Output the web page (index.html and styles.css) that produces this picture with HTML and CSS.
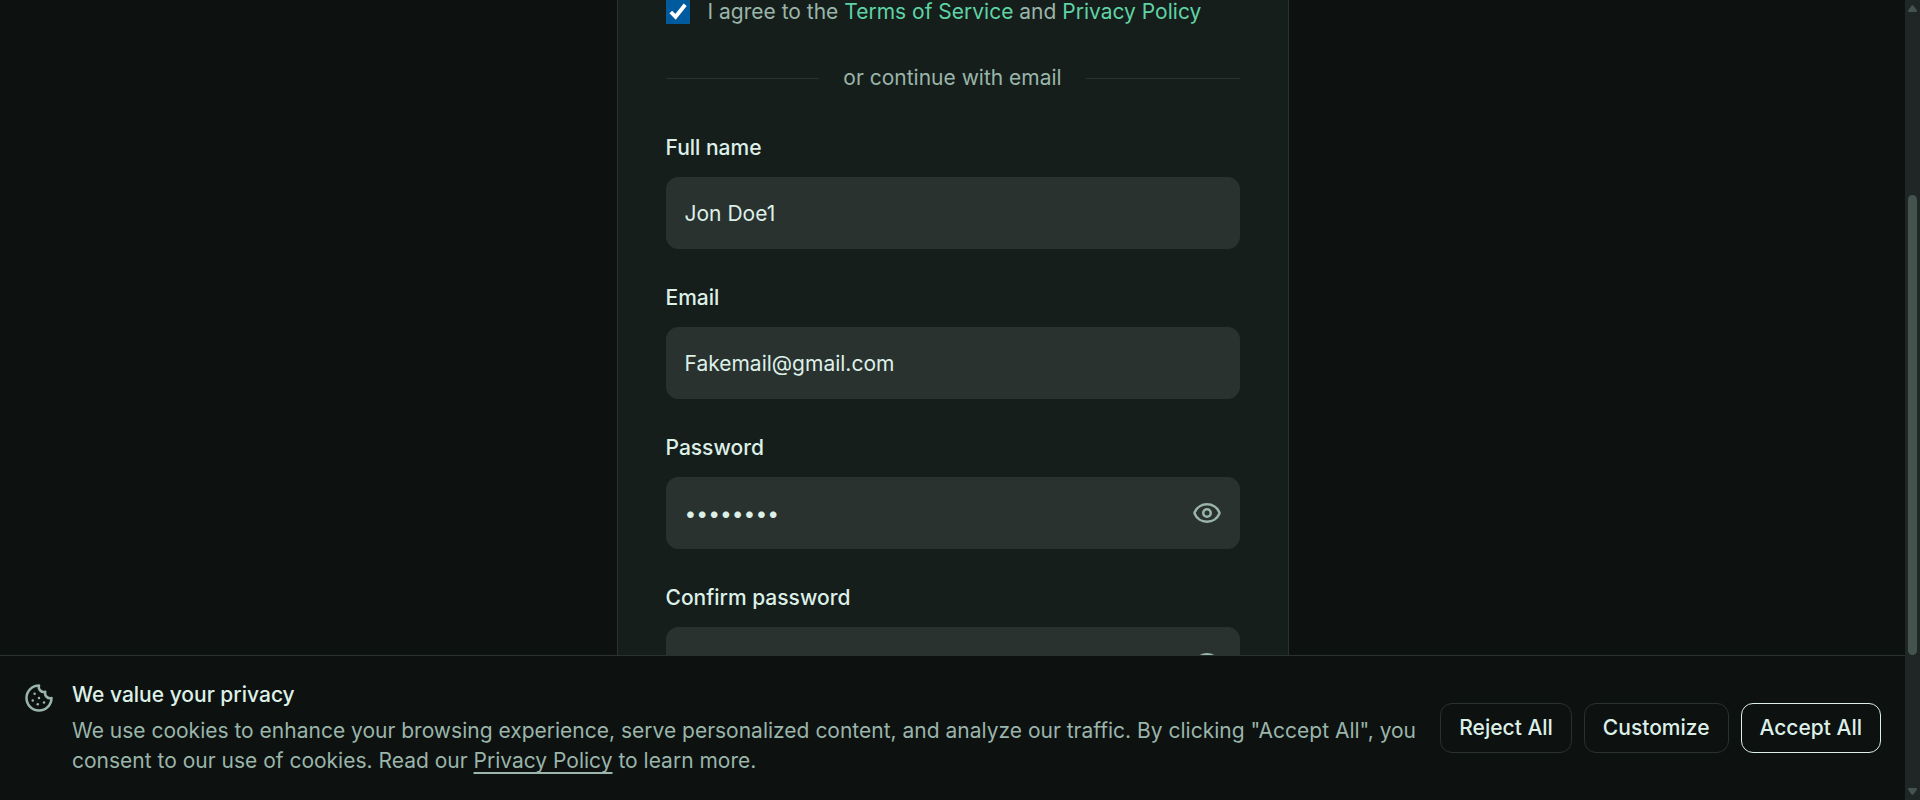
FILE: index.html
```html
<!DOCTYPE html>
<html lang="en">
<head>
<meta charset="utf-8">
<title>Create account</title>
<link rel="stylesheet" href="styles.css">
</head>
<body>
<div class="page">
  <main class="content">
    <form class="card">
      <div class="agree">
        <input class="agree-box" type="checkbox" id="agree" checked>
        <label for="agree">I agree to the <a class="link" href="#terms">Terms of Service</a> and <a class="link" href="#privacy">Privacy Policy</a></label>
      </div>
      <div class="divider">or continue with email</div>
      <div class="fields">
        <div class="field">
          <label class="field-label" for="name">Full name</label>
          <input class="field-input" id="name" type="text" value="Jon Doe1">
        </div>
        <div class="field">
          <label class="field-label" for="email">Email</label>
          <input class="field-input" id="email" type="email" value="Fakemail@gmail.com">
        </div>
        <div class="field">
          <label class="field-label" for="password">Password</label>
          <div class="secret">
            <input class="field-input" id="password" type="password" value="password">
            <button class="reveal" type="button" aria-label="Show password">
              <svg class="icon" viewBox="0 0 24 24"><path d="M2.062 12.348a1 1 0 0 1 0-.696 10.75 10.75 0 0 1 19.876 0 1 1 0 0 1 0 .696 10.75 10.75 0 0 1-19.876 0"/><circle cx="12" cy="12" r="3"/></svg>
            </button>
          </div>
        </div>
        <div class="field">
          <label class="field-label" for="confirm">Confirm password</label>
          <div class="secret">
            <input class="field-input" id="confirm" type="password">
            <button class="reveal" type="button" aria-label="Show confirmed password">
              <svg class="icon" viewBox="0 0 24 24"><path d="M2.062 12.348a1 1 0 0 1 0-.696 10.75 10.75 0 0 1 19.876 0 1 1 0 0 1 0 .696 10.75 10.75 0 0 1-19.876 0"/><circle cx="12" cy="12" r="3"/></svg>
            </button>
          </div>
        </div>
      </div>
    </form>
  </main>
  <section class="banner" aria-labelledby="banner-title">
    <svg class="icon banner-icon" viewBox="0 0 24 24"><path d="M12 2a10 10 0 1 0 10 10 4 4 0 0 1-5-5 4 4 0 0 1-5-5"/><path d="M8.5 8.5v.01"/><path d="M16 15.5v.01"/><path d="M12 12v.01"/><path d="M11 17v.01"/><path d="M7 14v.01"/></svg>
    <div class="banner-text">
      <h2 class="banner-title" id="banner-title">We value your privacy</h2>
      <p class="banner-copy">We use cookies to enhance your browsing experience, serve personalized content, and analyze our traffic. By clicking "Accept All", you consent to our use of cookies. Read our <a class="banner-link" href="#privacy">Privacy Policy</a> to learn more.</p>
    </div>
    <div class="actions">
      <button class="btn" type="button">Reject All</button>
      <button class="btn" type="button">Customize</button>
      <button class="btn btn-primary" type="button">Accept All</button>
    </div>
  </section>
</div>
<div class="scroll" aria-hidden="true">
  <svg class="arrow" viewBox="0 0 9 7"><path d="M4.500 0C5.200 0 9 5 9 6Q9 7 8 7H1Q0 7 0 6C0 5 3.800 0 4.500 0Z"/></svg>
  <div class="track">
    <div class="thumb"></div>
  </div>
  <svg class="arrow" viewBox="0 0 9 7"><path d="M4.500 7C5.200 7 9 2 9 1Q9 0 8 0H1Q0 0 0 1C0 2 3.800 7 4.500 7Z"/></svg>
</div>
</body>
</html>
```
FILE: styles.css
```css
:root {
  --bg: #0d1110;
  --card: #161e1b;
  --field: #29322f;
  --line: #29322f;
  --text: #ddf0e8;
  --muted: #9ab5aa;
  --accent: #5fd3a5;
}

* {
  box-sizing: border-box;
}

body {
  margin: 0;
  height: 100vh;
  display: flex;
  overflow: hidden;
  background: var(--bg);
  color: var(--text);
  font: 400 21px/30px Inter, "Liberation Sans", sans-serif;
}

.page {
  flex: 1;
  min-width: 0;
  display: flex;
  flex-direction: column;
}

.content {
  flex: 1;
  min-height: 0;
  overflow: hidden;
}

.card {
  max-width: 672px;
  margin: 0 auto;
  padding: 0 48px 48px;
  background: var(--card);
  border: solid var(--line);
  border-width: 0 1px;
}

.agree {
  display: flex;
  align-items: center;
  gap: 18px;
  line-height: 24px;
  color: var(--muted);
}

.agree-box {
  width: 24px;
  height: 24px;
  margin: 0;
  accent-color: #005a9e;
}

.link {
  color: var(--accent);
  text-decoration: none;
}

.divider {
  display: flex;
  align-items: center;
  gap: 24px;
  margin: 39px 0 43px;
  color: var(--muted);
}

.divider::before,
.divider::after {
  content: "";
  flex: 1;
  height: 1px;
  background: var(--line);
}

.fields {
  display: flex;
  flex-direction: column;
  gap: 37px;
}

.field {
  display: flex;
  flex-direction: column;
  gap: 17px;
}

.field-label {
  font-weight: 500;
  line-height: 24px;
}

.field-input {
  width: 100%;
  height: 72px;
  padding: 0 18px;
  border: 1px solid var(--field);
  border-radius: 12px;
  outline: none;
  background: var(--field);
  color: var(--text);
  font: inherit;
}

.secret {
  position: relative;
}

.reveal {
  position: absolute;
  inset: 0 18px 0 auto;
  display: flex;
  align-items: center;
  padding: 0;
  border: 0;
  background: none;
  color: var(--muted);
}

.icon {
  width: 30px;
  height: 30px;
  flex: none;
  fill: none;
  stroke: currentColor;
  stroke-width: 2;
  stroke-linecap: round;
  stroke-linejoin: round;
}

.banner {
  display: flex;
  align-items: center;
  padding: 24px;
  border-top: 1px solid var(--line);
}

.banner-icon {
  align-self: flex-start;
  margin: 3px 18px 0 0;
  color: var(--muted);
}

.banner-text {
  flex: 1;
  min-width: 0;
  margin-right: 24px;
}

.banner-title {
  margin: 0 0 6px;
  font-size: 21px;
  font-weight: 500;
}

.banner-copy {
  margin: 0;
  color: var(--muted);
}

.banner-link {
  color: inherit;
  text-underline-offset: 4px;
}

.actions {
  display: flex;
  gap: 12px;
}

.btn {
  height: 50px;
  padding: 0 18px;
  border: 1px solid var(--line);
  border-radius: 12px;
  background: none;
  color: var(--text);
  font: inherit;
  font-weight: 500;
}

.btn-primary {
  border-color: var(--text);
}

.scroll {
  width: 15px;
  display: flex;
  flex-direction: column;
  align-items: center;
  padding: 5px 0;
  background: #1e2725;
}

.arrow {
  width: 9px;
  height: 7px;
  fill: #44534d;
}

.track {
  flex: 1;
  width: 9px;
  padding-top: 183px;
}

.thumb {
  height: calc((100% + 183px) * 0.593);
  border-radius: 5px;
  background: #44534d;
}
```
